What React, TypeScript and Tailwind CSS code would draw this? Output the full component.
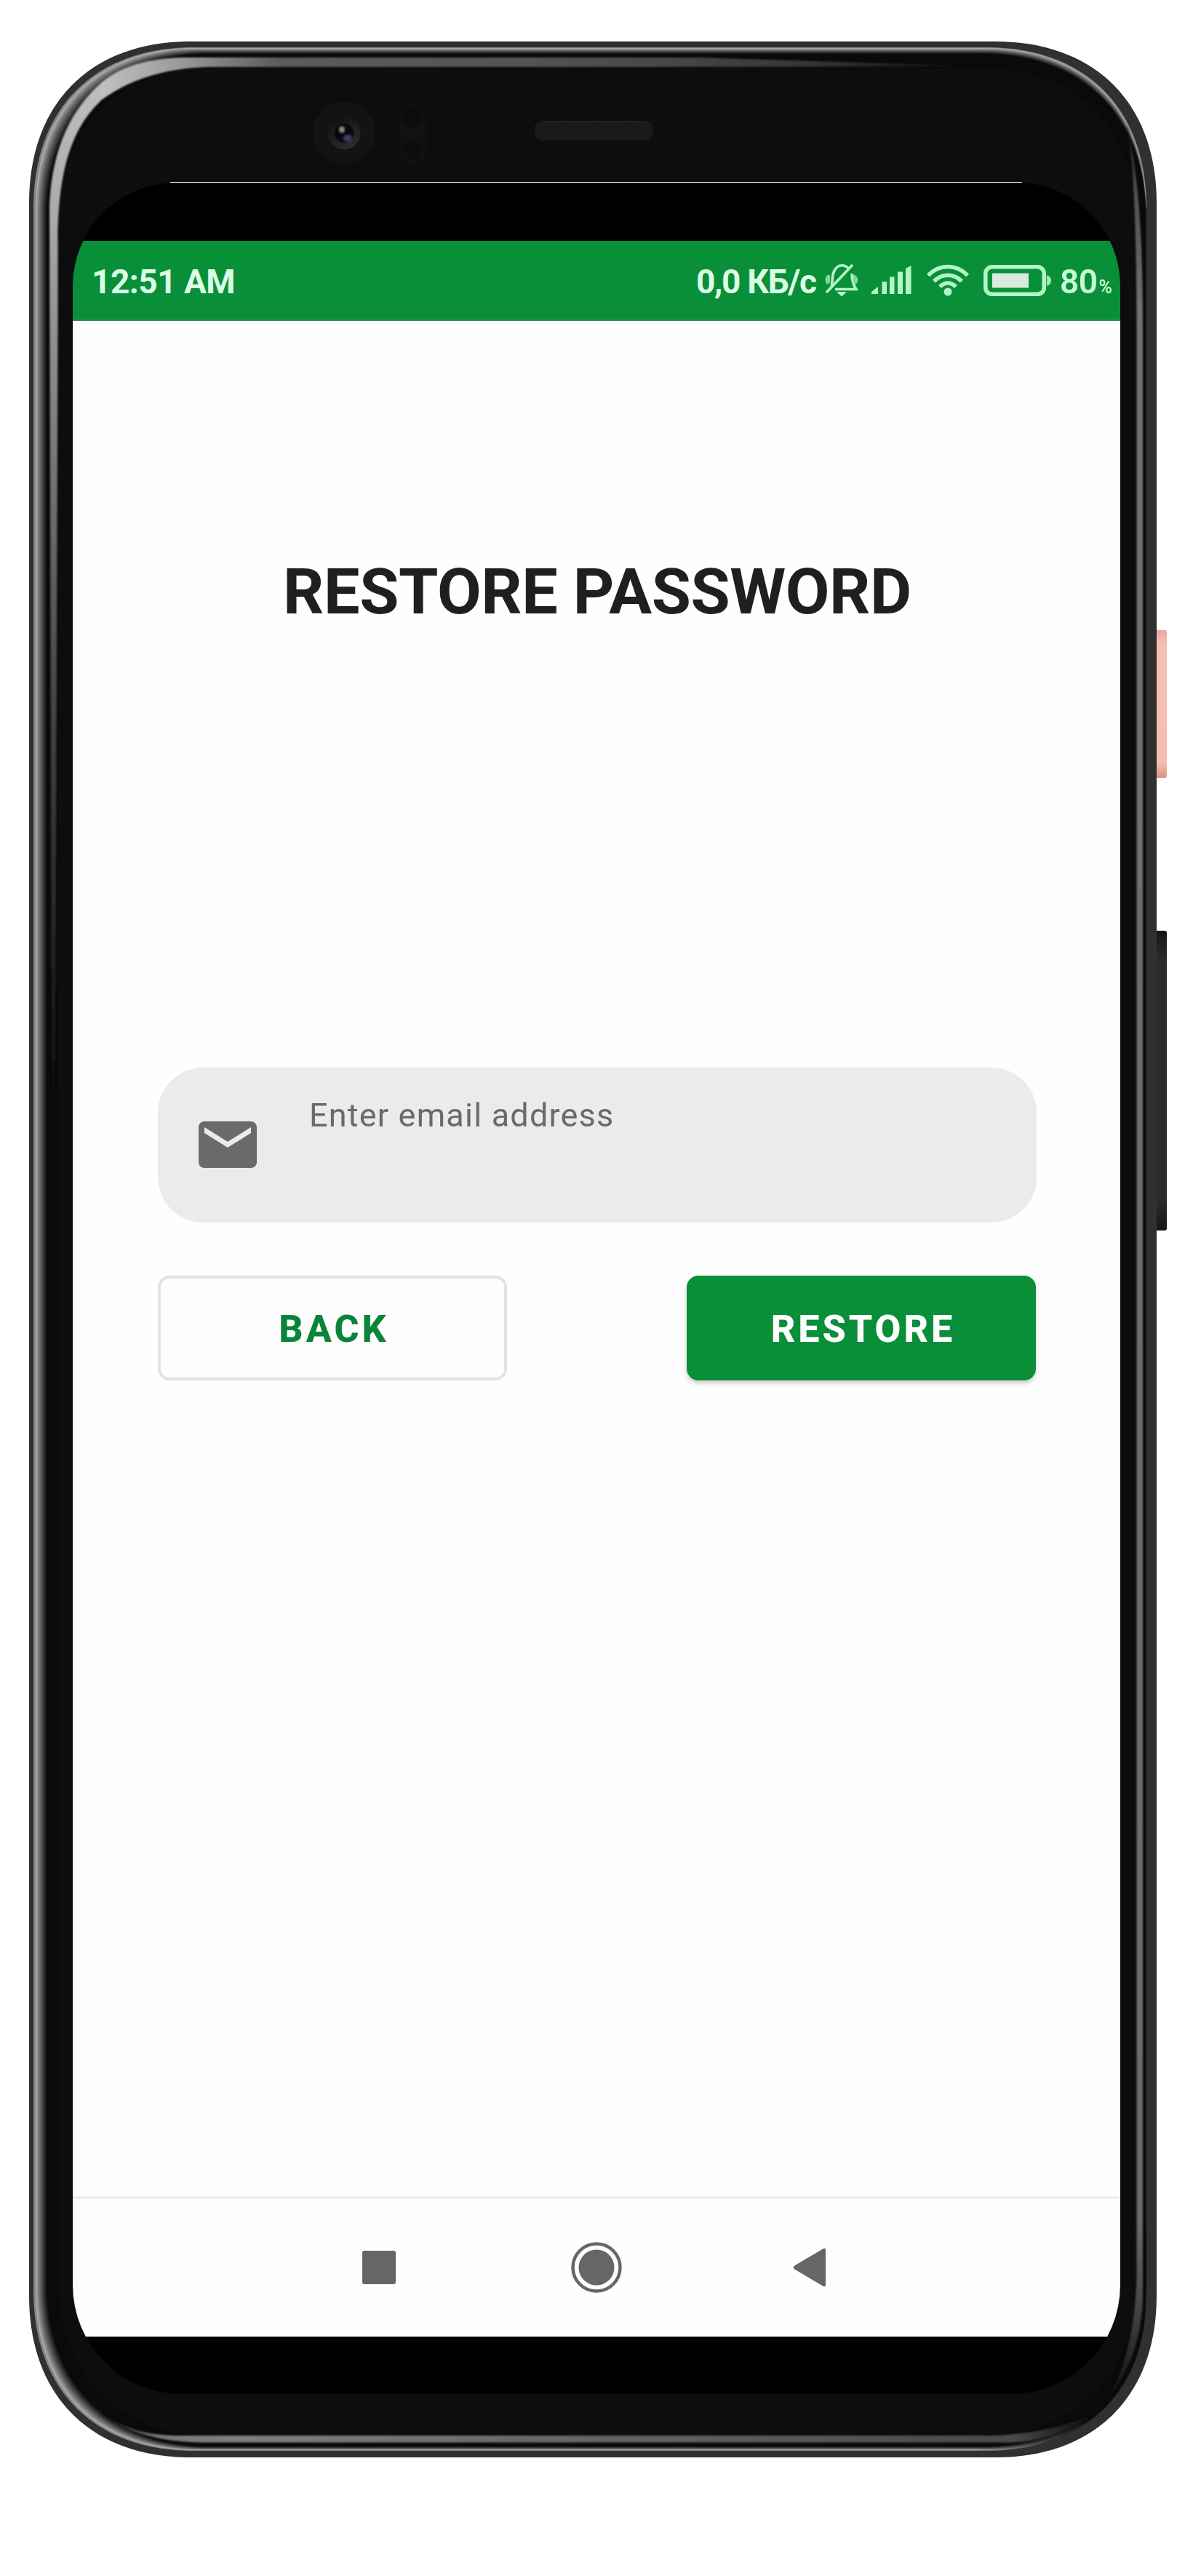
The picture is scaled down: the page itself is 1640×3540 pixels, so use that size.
import React from "react";

type Box = { l: number; t: number; r: number; b: number; c: number };

// Rounded outline whose corners are slightly fuller than a circular arc.
function outline({ l, t, r, b, c }: Box) {
  const k = c * 0.381;
  return `M${l} ${t + c}C${l} ${t + k} ${l + k} ${t} ${l + c} ${t}H${r - c}C${r - k} ${t} ${r} ${t + k} ${r} ${t + c}V${b - c}C${r} ${b - k} ${r - k} ${b} ${r - c} ${b}H${l + c}C${l + k} ${b} ${l} ${b - k} ${l} ${b - c}Z`;
}

const RIM_STEPS = 16;
const rim = Array.from({ length: RIM_STEPS + 1 }, (_, i) => {
  const f = i / RIM_STEPS;
  const shade = Math.round(176 - (176 - 10) * Math.pow(f, 0.85));
  return {
    d: outline({ l: 49 + 15 * f, t: 66 + 8 * f, r: 1575, b: 3367 - 5 * f, c: 220 + 6 * f }),
    fill: `rgb(${shade},${shade},${shade})`,
  };
});

const GLINT =
  "M71 1500L68 290C70 195 105 144 140 113C173 86 215 79 260 79H960L1345 91L900 92H290C235 93 185 105 140 137C105 170 80 220 79.5 330V450L76 1500Z";

function PhoneBody() {
  return (
    <svg className="absolute inset-0" width="1640" height="3540" viewBox="0 0 1640 3540">
      <defs>
        <linearGradient id="glintTop" gradientUnits="userSpaceOnUse" x1="140" y1="0" x2="1345" y2="0">
          <stop offset="0" stopColor="#c0c0c0" />
          <stop offset="0.09" stopColor="#9a9a9a" />
          <stop offset="0.2" stopColor="#5c5c5c" />
          <stop offset="0.55" stopColor="#505050" />
          <stop offset="0.8" stopColor="#383838" />
          <stop offset="1" stopColor="#0d0d0f" />
        </linearGradient>
        <linearGradient id="glintLeft" gradientUnits="userSpaceOnUse" x1="0" y1="100" x2="0" y2="1500">
          <stop offset="0" stopColor="#c0c0c0" />
          <stop offset="0.14" stopColor="#aaaaaa" />
          <stop offset="0.3" stopColor="#888888" />
          <stop offset="0.6" stopColor="#484848" />
          <stop offset="0.85" stopColor="#242424" />
          <stop offset="1" stopColor="#0d0d0f" />
        </linearGradient>
        <linearGradient id="glintRight" gradientUnits="userSpaceOnUse" x1="0" y1="170" x2="0" y2="3300">
          <stop offset="0" stopColor="#0d0d0f" />
          <stop offset="0.03" stopColor="#505050" />
          <stop offset="0.08" stopColor="#707070" />
          <stop offset="0.92" stopColor="#6c6c6e" />
          <stop offset="0.955" stopColor="#4a4a4c" />
          <stop offset="1" stopColor="#0d0d0f" />
        </linearGradient>
        <linearGradient id="glintBottom" gradientUnits="userSpaceOnUse" x1="135" y1="0" x2="1500" y2="0">
          <stop offset="0" stopColor="#0d0d0f" />
          <stop offset="0.06" stopColor="#78787a" />
          <stop offset="0.14" stopColor="#7e7e80" />
          <stop offset="0.6" stopColor="#5e5e60" />
          <stop offset="0.92" stopColor="#4a4a4a" />
          <stop offset="1" stopColor="#0d0d0f" />
        </linearGradient>
        <linearGradient id="rimFade" gradientUnits="userSpaceOnUse" x1="1340" y1="0" x2="1500" y2="0">
          <stop offset="0" stopColor="#0a0a0b" stopOpacity="0" />
          <stop offset="1" stopColor="#0a0a0b" />
        </linearGradient>
        <linearGradient id="power" x1="0" y1="0" x2="0" y2="1">
          <stop offset="0" stopColor="#e9a89c" />
          <stop offset="0.1" stopColor="#f5c1b5" />
          <stop offset="0.9" stopColor="#f4bdb1" />
          <stop offset="1" stopColor="#d99186" />
        </linearGradient>
        <linearGradient id="volume" x1="0" y1="0" x2="0" y2="1">
          <stop offset="0" stopColor="#141414" />
          <stop offset="0.1" stopColor="#2c2c2c" />
          <stop offset="0.9" stopColor="#2a2a2a" />
          <stop offset="1" stopColor="#171717" />
        </linearGradient>
        <linearGradient id="lens" x1="0" y1="0" x2="0.5" y2="1">
          <stop offset="0" stopColor="#0d0d0f" />
          <stop offset="1" stopColor="#2b2b2e" />
        </linearGradient>
        <pattern id="mesh" width="4" height="4" patternUnits="userSpaceOnUse">
          <rect width="4" height="4" fill="#121212" />
          <rect width="2" height="2" fill="#222222" />
          <rect x="2" y="2" width="2" height="2" fill="#222222" />
        </pattern>
        <clipPath id="cutLeft">
          <rect x="0" y="0" width="140" height="1600" />
        </clipPath>
        <clipPath id="cutTop">
          <rect x="140" y="0" width="1300" height="200" />
        </clipPath>
        <filter id="soft">
          <feGaussianBlur stdDeviation="1.6" />
        </filter>
        <filter id="edge" filterUnits="userSpaceOnUse" x="0" y="0" width="1640" height="3540">
          <feGaussianBlur stdDeviation="0.8" />
        </filter>
      </defs>

      <rect x="1586" y="866" width="18" height="203" rx="3" fill="url(#power)" />
      <rect x="1586" y="1279" width="18" height="412" rx="3" fill="url(#volume)" />

      <path d={outline({ l: 40, t: 57, r: 1590, b: 3377, c: 222 })} fill="#303030" />
      <path d={outline({ l: 46, t: 65, r: 1576, b: 3368, c: 220 })} fill="#868686" />
      {rim.map((ring) => (
        <path key={ring.d} d={ring.d} fill={ring.fill} />
      ))}
      <rect x="1574" y="285" width="2" height="2860" fill="#111112" />
      <path
        d="M1340 3368H1356C1440 3368 1492 3336 1520 3308C1550 3276 1576 3232 1576 3148V3060H1560V3148C1560 3270 1480 3355 1340 3360Z"
        fill="url(#rimFade)"
      />
      <path d={outline({ l: 80, t: 93, r: 1562, b: 3347, c: 215 })} fill="#0d0d0f" />

      <g filter="url(#edge)">
        <path d={GLINT} fill="url(#glintLeft)" clipPath="url(#cutLeft)" />
        <path d={GLINT} fill="url(#glintTop)" clipPath="url(#cutTop)" />
        <path
          d="M1549 170C1561 220 1571 290 1571 450V3150C1571 3215 1550 3265 1520 3300C1543 3265 1560 3210 1562.500 3130V450C1562 320 1560 240 1549 170Z"
          fill="url(#glintRight)"
        />
        <path
          d="M135 3315C170 3338 205 3347 245 3347H1370C1420 3344 1460 3336 1502 3318C1465 3343 1430 3356 1390 3356.500H280C225 3356 175 3345 135 3315Z"
          fill="url(#glintBottom)"
        />
      </g>

      <circle cx="473" cy="183" r="43" fill="#131313" />
      <circle cx="473" cy="183" r="22.500" fill="url(#lens)" />
      <circle cx="473" cy="183" r="13" fill="#08080a" />
      <ellipse cx="478" cy="190" rx="6" ry="5" fill="#3a4163" filter="url(#soft)" />
      <ellipse cx="470" cy="178" rx="4" ry="4.500" fill="#8a8a8a" filter="url(#soft)" />
      <rect x="548" y="143" width="37" height="82" rx="18.500" fill="#111112" />
      <circle cx="566.500" cy="161" r="14.500" fill="#0d0d0d" />
      <circle cx="566.500" cy="206" r="14.500" fill="#0d0d0d" />
      <rect x="735" y="166" width="163" height="27" rx="11" fill="url(#mesh)" />
      <path d="M746 166.500H887" stroke="#262626" />
      <path d="M234 250.500H1405" stroke="#ffffff" />
    </svg>
  );
}

function MutedBell() {
  return (
    <svg width="48" height="46" viewBox="0 0 48 46" fill="none" stroke="#b4f5c8" strokeWidth="3.600">
      <path d="M10 31C12 25 10 17 14 10C17 4 22 2 27 3C31 4 33 6 34 8" />
      <path d="M38 14C38 22 39 28 44 35.500H15" />
      <path d="M39 2L3 40" />
      <path d="M17 39H31L24 45.500Z" fill="#b4f5c8" stroke="none" />
      <path d="M6 15C0 19 1 25 4 29L8 26V17ZM40 15C48 18 48 26 43 29L40 26Z" fill="#7fd79a" stroke="none" />
    </svg>
  );
}

function Signal() {
  return (
    <svg width="55" height="40" viewBox="0 0 55 40" fill="#b4f5c8">
      <path d="M0 39V36L9 29V39Z" />
      <rect x="14.500" y="22" width="6.500" height="17" />
      <rect x="25" y="15.500" width="6.500" height="23.500" />
      <rect x="36" y="8.500" width="7" height="30.500" />
      <path d="M47 4L54.500 0V39H47Z" />
    </svg>
  );
}

function Wifi() {
  return (
    <svg width="58" height="44" viewBox="0 0 58 44" fill="none" stroke="#b4f5c8" strokeWidth="5.600">
      <path d="M2 15.500C17 -0.500 41 -0.500 56 15.500" />
      <path d="M10 23.500C21 12.500 37 12.500 48 23.500" />
      <path d="M18 31C25 24.500 33 24.500 40 31" />
      <circle cx="29" cy="38" r="5.500" fill="#b4f5c8" stroke="none" />
    </svg>
  );
}

function Battery() {
  return (
    <svg width="93" height="43" viewBox="0 0 93 43">
      <rect x="2.800" y="2.800" width="80.500" height="37.500" rx="9" fill="none" stroke="#b4f5c8" strokeWidth="5.600" />
      <rect x="12" y="11.500" width="50" height="20" fill="#d8ecdc" />
      <path d="M87 14Q93 16 93 21.500Q93 27 87 29Z" fill="#a0eab8" />
    </svg>
  );
}

function StatusBar() {
  return (
    <header className="flex h-[110px] shrink-0 items-center border-b-2 border-[#3a8457] bg-[#0a8f39] pl-[26px] text-[46px] font-bold leading-none tracking-[-0.5px] text-[#dcffe6]">
      <span className="w-[831px] whitespace-nowrap pt-[3px]">12:51 AM</span>
      <span className="w-[176px] whitespace-nowrap pt-[3px] tracking-[-1.3px]">0,0 КБ/с</span>
      <span className="mr-[17px]">
        <MutedBell />
      </span>
      <span className="mr-[21px]">
        <Signal />
      </span>
      <span className="mr-[20px]">
        <Wifi />
      </span>
      <span className="mr-[12px]">
        <Battery />
      </span>
      <span className="flex items-baseline whitespace-nowrap pt-[3px] font-semibold text-[#c8fad6]">
        80<span className="ml-[2px] text-[25px]">%</span>
      </span>
    </header>
  );
}

function RestoreForm() {
  return (
    <main className="flex flex-1 flex-col bg-[#fefefe] pl-[117px] pr-[115px] pt-[322px]">
      <h1 className="whitespace-nowrap text-center text-[88px] font-bold leading-[100px] tracking-[-0.4px] text-[#1f1f1f]">
        RESTORE PASSWORD
      </h1>
      <label className="mt-[604px] flex h-[213px] rounded-[62px] bg-[#ebebeb]">
        <svg className="ml-[56px] mt-[74px]" width="80" height="64" viewBox="2 4 20 16" fill="#6a6a6a">
          <path d="M20 4H4c-1.100 0-2 .9-2 2v12c0 1.100.9 2 2 2h16c1.100 0 2-.9 2-2V6c0-1.100-.9-2-2-2zm0 4l-8 5-8-5V6l8 5 8-5v2z" />
        </svg>
        <span className="ml-[72px] mt-[40px] whitespace-nowrap text-[45px] leading-[52px] tracking-[1.2px] text-[#6a6a6a]">
          Enter email address
        </span>
      </label>
      <div className="mt-[73px] flex justify-between pr-px text-[52px] font-extrabold leading-none tracking-[4px]">
        <button className="h-[144px] w-[480px] rounded-[16px] border-4 border-[#e2e2e2] pl-[4px] pt-[4px] text-[#0a8439]">
          BACK
        </button>
        <button className="h-[144px] w-[480px] rounded-[16px] bg-[#0a8f39] pl-[5px] pt-[4px] text-white shadow-[0_4px_6px_rgba(0,0,0,0.2)]">
          RESTORE
        </button>
      </div>
    </main>
  );
}

function NavBar() {
  return (
    <nav className="flex h-[193px] shrink-0 items-center border-t-[4px] border-[#f0f0f0] bg-[#fefefe] pb-[2px] pl-[398px]">
      <div className="size-[46px] rounded-[3px] bg-[#666666]" />
      <svg className="ml-[241px]" width="70" height="70" viewBox="0 0 70 70" fill="#666666">
        <circle cx="35" cy="35" r="32.500" fill="none" stroke="#666666" strokeWidth="4.500" />
        <circle cx="35" cy="35" r="24.500" />
      </svg>
      <svg className="ml-[235px]" width="45" height="54" viewBox="0 0 45 54" fill="#666666">
        <path d="M1.500 25Q0 27 1.500 29L42 53Q45 54 45 51V3Q45 0 42 1Z" />
      </svg>
    </nav>
  );
}

export default function App() {
  return (
    <div className="relative h-[3540px] w-[1640px] overflow-hidden bg-white pl-[100px] pt-[251px] font-['Roboto',sans-serif]">
      <PhoneBody />
      <div className="relative flex h-[3039px] w-[1440px] flex-col overflow-hidden rounded-b-[150px] rounded-t-[142px] bg-black pb-[79px] pt-[80px]">
        <StatusBar />
        <RestoreForm />
        <NavBar />
      </div>
    </div>
  );
}
